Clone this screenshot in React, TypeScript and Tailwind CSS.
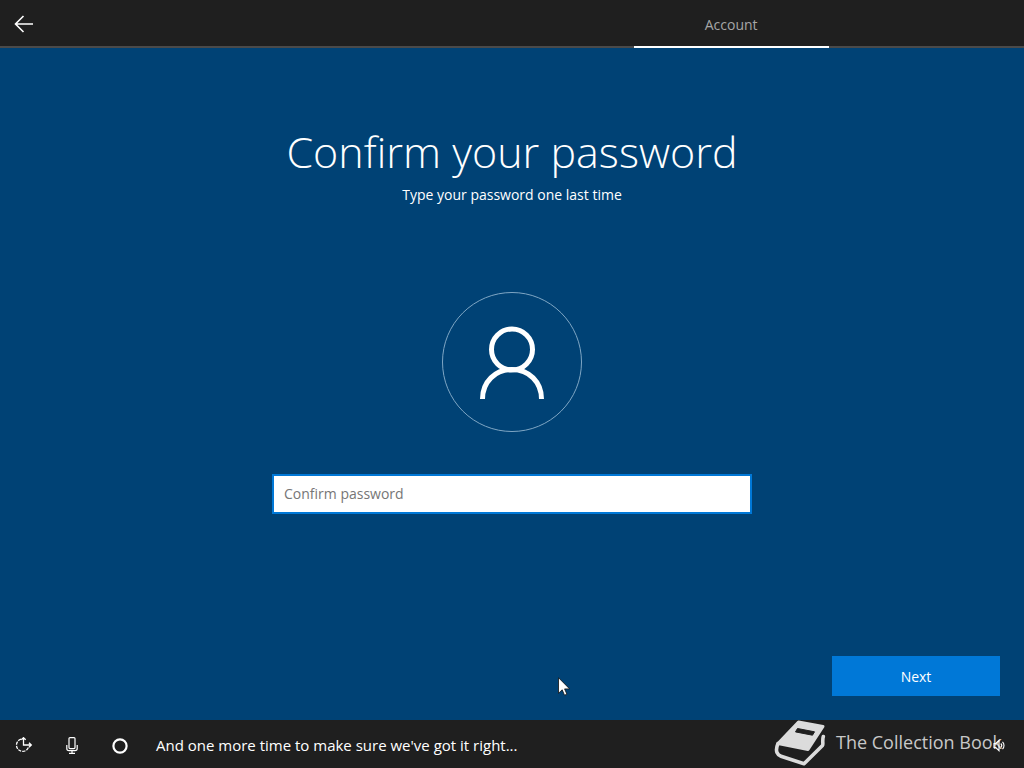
import React, { useState } from 'react';

function BackIcon() {
  return (
    <svg width="20" height="18" viewBox="0 0 20 18" fill="none" stroke="currentColor" strokeWidth="1.6" aria-hidden="true">
      <path d="M19 9H2M9.500 1L1.500 9l8 8" />
    </svg>
  );
}

function UserIcon() {
  return (
    <svg width="66" height="74" viewBox="0 0 66 74" fill="none" stroke="currentColor" strokeWidth="5" aria-hidden="true">
      <circle cx="33" cy="23.500" r="20.500" />
      <path d="M3.500 73C3.500 56 16 43.500 33 43.500S62.500 56 62.500 73" />
    </svg>
  );
}

function EaseOfAccessIcon() {
  return (
    <svg width="18" height="16" viewBox="0 0 18 16" fill="none" stroke="currentColor" strokeWidth="1.3" aria-hidden="true">
      <path d="M6 2.200A6.200 6.200 0 1 0 13.600 10" strokeDasharray="3.200 1.100" />
      <path d="M8.500 0.500V8H16M6.300 2.700L8.500 0.700l2.200 2M14 5.800L16.300 8 14 10.200" />
    </svg>
  );
}

function MicIcon() {
  return (
    <svg width="12" height="17" viewBox="0 0 12 17" fill="none" stroke="currentColor" strokeWidth="1.2" aria-hidden="true">
      <rect x="3" y="0.600" width="6" height="11" rx="1" />
      <path d="M0.800 8v3.500c0 1.300 1 2.200 2.200 2.200h6c1.200 0 2.200-.9 2.200-2.200V8M6 13.700v2.600M3 16.300h6" />
    </svg>
  );
}

function CortanaIcon() {
  return (
    <svg width="16" height="16" viewBox="0 0 16 16" fill="none" stroke="currentColor" strokeWidth="2.200" aria-hidden="true">
      <circle cx="8" cy="8" r="6.600" />
    </svg>
  );
}

function VolumeIcon() {
  return (
    <svg width="14" height="13" viewBox="0 0 14 13" fill="none" stroke="currentColor" strokeWidth="1.100" aria-hidden="true">
      <path d="M1 4.500h1.800L6 1.300v10.400L2.800 8.500H1z" />
      <path d="M7.800 4.500c1.200 1.200 1.200 2.800 0 4M9.500 2.900c2 2 2 5.200 0 7.200" />
    </svg>
  );
}

function BookIcon() {
  return (
    <svg width="52" height="48" viewBox="0 0 52 48" aria-hidden="true">
      <path
        d="M24.500 2L49 6.500 34 29.500 4 23.500z"
        fill="#dcdcdc"
        stroke="#dcdcdc"
        strokeWidth="3"
        strokeLinejoin="round"
      />
      <path
        d="M4 23.500C2.500 27 2 30 3 32.500C3.800 34.500 5 35.500 7 36.200L30 43.800L48.500 25.500C49.500 24 48 21 49.300 16.500"
        fill="none"
        stroke="#dcdcdc"
        strokeWidth="3.600"
        strokeLinecap="round"
        strokeLinejoin="round"
      />
      <path d="M23.500 8.500l17 3.300-2 3.400-17-3.300z" fill="#1f1f1f" stroke="#1f1f1f" strokeLinejoin="round" />
    </svg>
  );
}

function Cursor() {
  return (
    <svg className="absolute left-[558px] top-[677px]" width="12" height="19" viewBox="0 0 12 19" aria-hidden="true">
      <path d="M0.500 0.700v15.600l3.700-3.500 2.300 5.400 2.400-1-2.300-5.300h5z" fill="#fff" stroke="#111" strokeWidth="0.800" />
    </svg>
  );
}

export default function App() {
  const [password, setPassword] = useState('');

  return (
    <div className="relative flex min-h-screen flex-col bg-[#004275] text-white font-['Segoe_UI','Open_Sans','Noto_Sans',sans-serif]">
      {/* Top bar */}
      <header className="flex h-12 bg-[#1f1f1f]">
        <button type="button" aria-label="Back" className="flex w-12 items-center justify-center border-b-2 border-[#4a4a4a] pt-0.5">
          <BackIcon />
        </button>
        <nav className="grid flex-1 grid-cols-5">
          <div className="col-span-3 border-b-2 border-[#4a4a4a]" />
          <a href="#account" aria-current="step" className="flex items-center justify-center border-b-2 border-white pt-1 text-sm text-[#a6a6a6]">
            Account
          </a>
          <div className="border-b-2 border-[#4a4a4a]" />
        </nav>
      </header>

      {/* Password step */}
      <form className="flex flex-1 flex-col items-center px-6 pb-6" onSubmit={(e) => e.preventDefault()}>
        <h1 className="mt-[72px] text-[43px] leading-16 font-light">Confirm your password</h1>
        <p className="text-sm leading-[22px]">Type your password one last time</p>

        <div className="mt-[86px] flex size-[140px] items-center justify-center rounded-full border border-[#7fa6c4] pt-0.5">
          <UserIcon />
        </div>

        <input
          type="password"
          aria-label="Confirm password"
          placeholder="Confirm password"
          value={password}
          onChange={(e) => setPassword(e.target.value)}
          className="mt-[42px] h-10 w-full max-w-[480px] border-2 border-[#0078d7] bg-white px-2.5 pb-0.5 text-sm text-black outline-none placeholder:text-[#767676]"
        />

        <button type="submit" className="mt-auto h-10 w-42 self-end bg-[#0078d7] pt-0.5 text-sm">
          Next
        </button>
      </form>

      {/* Bottom bar */}
      <footer className="relative flex h-12 items-center bg-[#1f1f1f]">
        <button type="button" aria-label="Ease of access" className="flex size-12 items-center justify-center pt-0.5">
          <EaseOfAccessIcon />
        </button>
        <button type="button" aria-label="Microphone" className="flex size-12 items-center justify-center pt-0.5">
          <MicIcon />
        </button>
        <button type="button" aria-label="Cortana" className="flex size-12 items-center justify-center pt-1">
          <CortanaIcon />
        </button>
        <p className="ml-3 flex-1 pt-0.5 text-[15px]">And one more time to make sure we've got it right...</p>

        {/* Watermark */}
        <div className="pointer-events-none absolute right-[22px] bottom-0 flex h-12 items-center gap-2.5 text-[#c8c8c8]">
          <BookIcon />
          <span className="pb-1 text-lg">The Collection Book</span>
        </div>

        <button type="button" aria-label="Volume" className="relative flex size-12 items-center justify-center pt-0.5">
          <VolumeIcon />
        </button>
      </footer>

      <Cursor />
    </div>
  );
}
